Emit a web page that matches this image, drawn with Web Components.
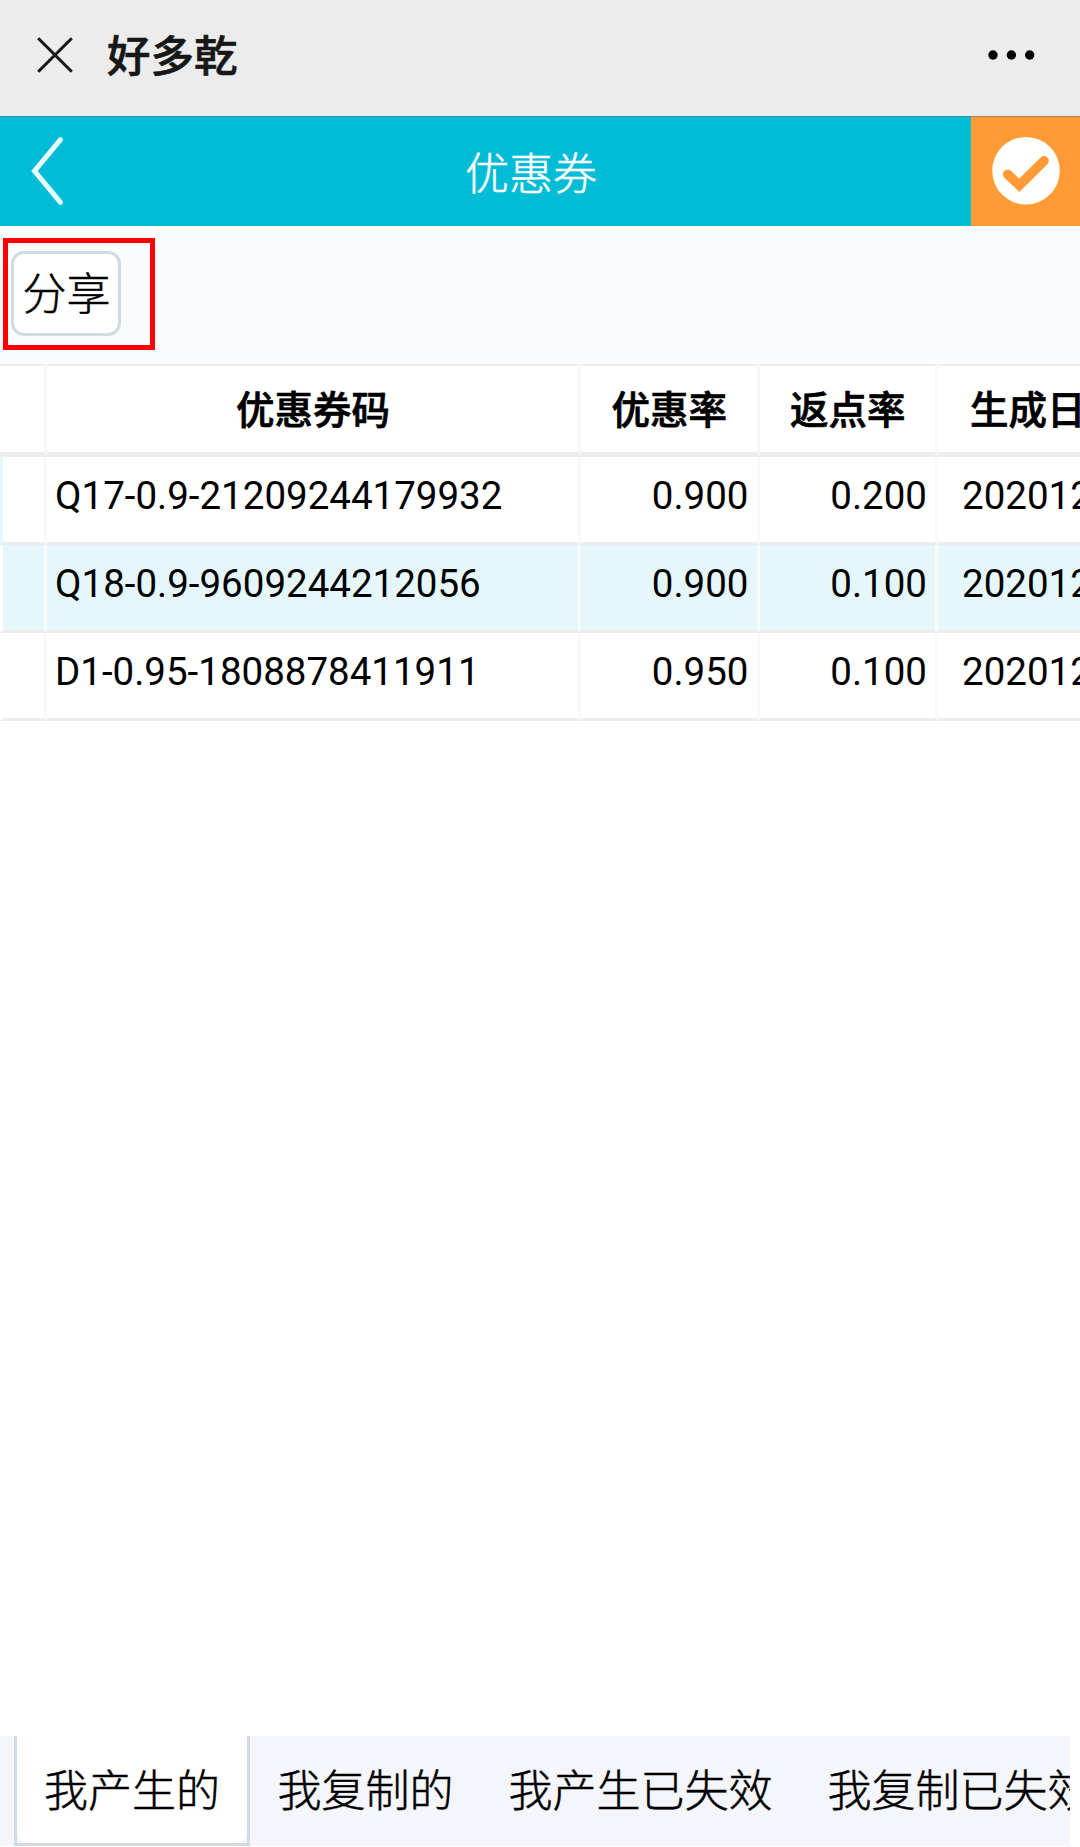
<!DOCTYPE html>
<html lang="zh-CN">
<head>
<meta charset="utf-8">
<title>优惠券</title>
<style>
  body {
    margin: 0;
    background: #fff;
    color: #000;
    font-family: Roboto, "Noto Sans CJK SC", sans-serif;
  }
</style>
</head>
<body>
<coupon-page>
  <webview-bar>好多乾</webview-bar>
  <nav-header>优惠券</nav-header>
  <tool-bar><tool-button>分享</tool-button></tool-bar>
  <coupon-table></coupon-table>
  <tab-bar slot="footer">
    <tab-item active>我产生的</tab-item>
    <tab-item>我复制的</tab-item>
    <tab-item>我产生已失效</tab-item>
    <tab-item>我复制已失效</tab-item>
  </tab-bar>
</coupon-page>

<script>
// create a template from a string of markup
function html(markup) {
  const template = document.createElement('template');
  template.innerHTML = markup;
  return template;
}

class BaseElement extends HTMLElement {
  constructor() {
    super();
    this.attachShadow({ mode: 'open' });
    this.shadowRoot.appendChild(this.constructor.template.content.cloneNode(true));
  }
}

class CouponPage extends BaseElement {}
CouponPage.template = html(`
  <style>
    :host {
      display: flex;
      flex-direction: column;
      height: 1847px;
      overflow: hidden;
    }
    main { flex: 1; min-height: 0; }
  </style>
  <main><slot></slot></main>
  <slot name="footer"></slot>
`);

class WebviewBar extends BaseElement {}
WebviewBar.template = html(`
  <style>
    :host {
      display: flex;
      align-items: center;
      height: 116px;
      box-sizing: border-box;
      padding: 0 45px 6px 37px;
      background: #ececec;
      color: #171717;
    }
    svg { display: block; }
    .title {
      flex: 1;
      margin-left: 34px;
      padding-top: 5px;
      font-size: 43.5px;
      font-weight: 500;
      line-height: 60px;
      -webkit-text-stroke: .6px;
    }
  </style>
  <svg width="36" height="36" viewBox="0 0 36 36" stroke="#171717" stroke-width="3">
    <path d="M1.2 1.2 34.8 34.8M34.8 1.2 1.2 34.8"/>
  </svg>
  <div class="title"><slot></slot></div>
  <svg width="47" height="10" viewBox="0 0 47 10" fill="#000">
    <circle cx="5" cy="5" r="4.7"/>
    <circle cx="23.4" cy="5" r="4.7"/>
    <circle cx="41.7" cy="5" r="4.7"/>
  </svg>
`);

class NavHeader extends BaseElement {}
NavHeader.template = html(`
  <style>
    :host {
      display: flex;
      height: 110px;
      background: #00bcd7;
      color: #fff;
    }
    .back { width: 91px; }
    .title {
      flex: 1;
      text-align: center;
      font-size: 44px;
      font-weight: 300;
      line-height: 116px;
      -webkit-text-stroke: .5px;
    }
    .confirm { width: 109px; background: #ff9a35; }
    .back, .title, .confirm {
      box-sizing: border-box;
      border-top: 1px solid rgba(90, 110, 120, .5);
    }
    svg { display: block; }
  </style>
  <div class="back">
    <svg width="91" height="109" viewBox="0 1 91 109" fill="none" stroke="#e8fdff" stroke-width="5" stroke-linecap="round">
      <path d="M60.5 23.6 34.5 55 60.5 86.4"/>
    </svg>
  </div>
  <div class="title"><slot></slot></div>
  <div class="confirm">
    <svg width="109" height="109" viewBox="0 1 109 109">
      <circle cx="55" cy="54.7" r="33.8" fill="#fff"/>
      <path d="M36.7 58.3 48.3 69.3 73 44.8" fill="none" stroke="#ff9a35" stroke-width="9.6" stroke-linecap="round"/>
    </svg>
  </div>
`);

class ToolBar extends BaseElement {}
ToolBar.template = html(`
  <style>
    :host {
      display: block;
      height: 138px;
      box-sizing: border-box;
      padding: 12px 3px;
      background: #fafbfd;
    }
    .mark {
      width: 152px;
      height: 112px;
      box-sizing: border-box;
      border: 5px solid #f00;
      padding: 8px 3px;
    }
  </style>
  <div class="mark"><slot></slot></div>
`);

class ToolButton extends BaseElement {}
ToolButton.template = html(`
  <style>
    :host { display: flex; }
    button {
      width: 110px;
      height: 85px;
      margin: 0;
      padding: 4px 0 0 1px;
      border: 3px solid #d0dce3;
      border-radius: 13px;
      background: #fff;
      color: #000;
      font: inherit;
      font-size: 44px;
      font-weight: 300;
      line-height: 75px;
      white-space: nowrap;
      -webkit-text-stroke: .5px;
    }
  </style>
  <button><slot></slot></button>
`);

const coupons = [
  ['Q17-0.9-21209244179932', '0.900', '0.200', '20201209'],
  ['Q18-0.9-9609244212056', '0.900', '0.100', '20201209'],
  ['D1-0.95-1808878411911', '0.950', '0.100', '20201209'],
];

class CouponTable extends BaseElement {
  connectedCallback() {
    const rows = this.shadowRoot.querySelector('.rows');
    rows.innerHTML = coupons.map(([code, discount, rebate, date]) => `
      <div class="row">
        <div class="cell"></div>
        <div class="cell">${code}</div>
        <div class="cell num">${discount}</div>
        <div class="cell num">${rebate}</div>
        <div class="cell date">${date.slice(0, 6)}</div>
      </div>
    `).join('');
  }
}
CouponTable.template = html(`
  <style>
    :host {
      display: block;
      overflow: hidden;
      font-size: 38.5px;
    }
    .head, .row {
      display: grid;
      grid-template-columns: 47px 534px 178.5px 178.5px 220px;
    }
    .head {
      height: 93px;
      font-weight: 500;
      text-align: center;
      -webkit-text-stroke: .7px;
    }
    .cell {
      box-sizing: border-box;
      border-right: 3px solid #f8f9fa;
      white-space: nowrap;
    }
    .head .cell {
      height: 93px;
      padding: 3px 0 0 1px;
      border-top: 2px solid #ebedef;
      border-bottom: 5px solid #ebedef;
      border-right-color: #f6f8f9;
      line-height: 83px;
    }
    .row .cell {
      height: 88px;
      padding: 0 8px;
      border-bottom: 3px solid #ebeef0;
      line-height: 77px;
    }
    .row .num { text-align: right; }
    .row .date { padding-left: 24px; }
    .row:nth-child(even) .cell { background: #e5f7fb; background-clip: padding-box; }
    .row .cell:first-child { border-left: 3px solid #fff; }
    .row:first-child .cell:first-child { border-left-color: #e5f7fb; }
  </style>
  <div class="head">
    <div class="cell"></div>
    <div class="cell">优惠券码</div>
    <div class="cell">优惠率</div>
    <div class="cell">返点率</div>
    <div class="cell">生成日期</div>
  </div>
  <div class="rows"></div>
`);

class TabBar extends BaseElement {}
TabBar.template = html(`
  <style>
    :host {
      display: flex;
      height: 110px;
      margin: 0 10px 1px 0;
      padding-left: 14px;
      overflow: hidden;
      background: #f5f6fb;
    }
  </style>
  <slot></slot>
`);

class TabItem extends BaseElement {}
TabItem.template = html(`
  <style>
    :host {
      display: block;
      flex: none;
      box-sizing: border-box;
      height: 110px;
      padding: 0 27.5px;
      font-size: 44px;
      font-weight: 300;
      line-height: 112px;
      white-space: nowrap;
      -webkit-text-stroke: .5px;
    }
    :host([active]) {
      width: 236px;
      border: 3px solid #d0dce3;
      border-top: 0;
      padding: 0;
      background: #f5f6fb;
    }
    :host([active]) div {
      height: 107px;
      padding-left: 27px;
      border-radius: 0 0 9px 9px;
      background: #fff;
    }
  </style>
  <div><slot></slot></div>
`);

window.customElements.define('coupon-page', CouponPage);
window.customElements.define('webview-bar', WebviewBar);
window.customElements.define('nav-header', NavHeader);
window.customElements.define('tool-bar', ToolBar);
window.customElements.define('tool-button', ToolButton);
window.customElements.define('coupon-table', CouponTable);
window.customElements.define('tab-bar', TabBar);
window.customElements.define('tab-item', TabItem);
</script>
</body>
</html>
